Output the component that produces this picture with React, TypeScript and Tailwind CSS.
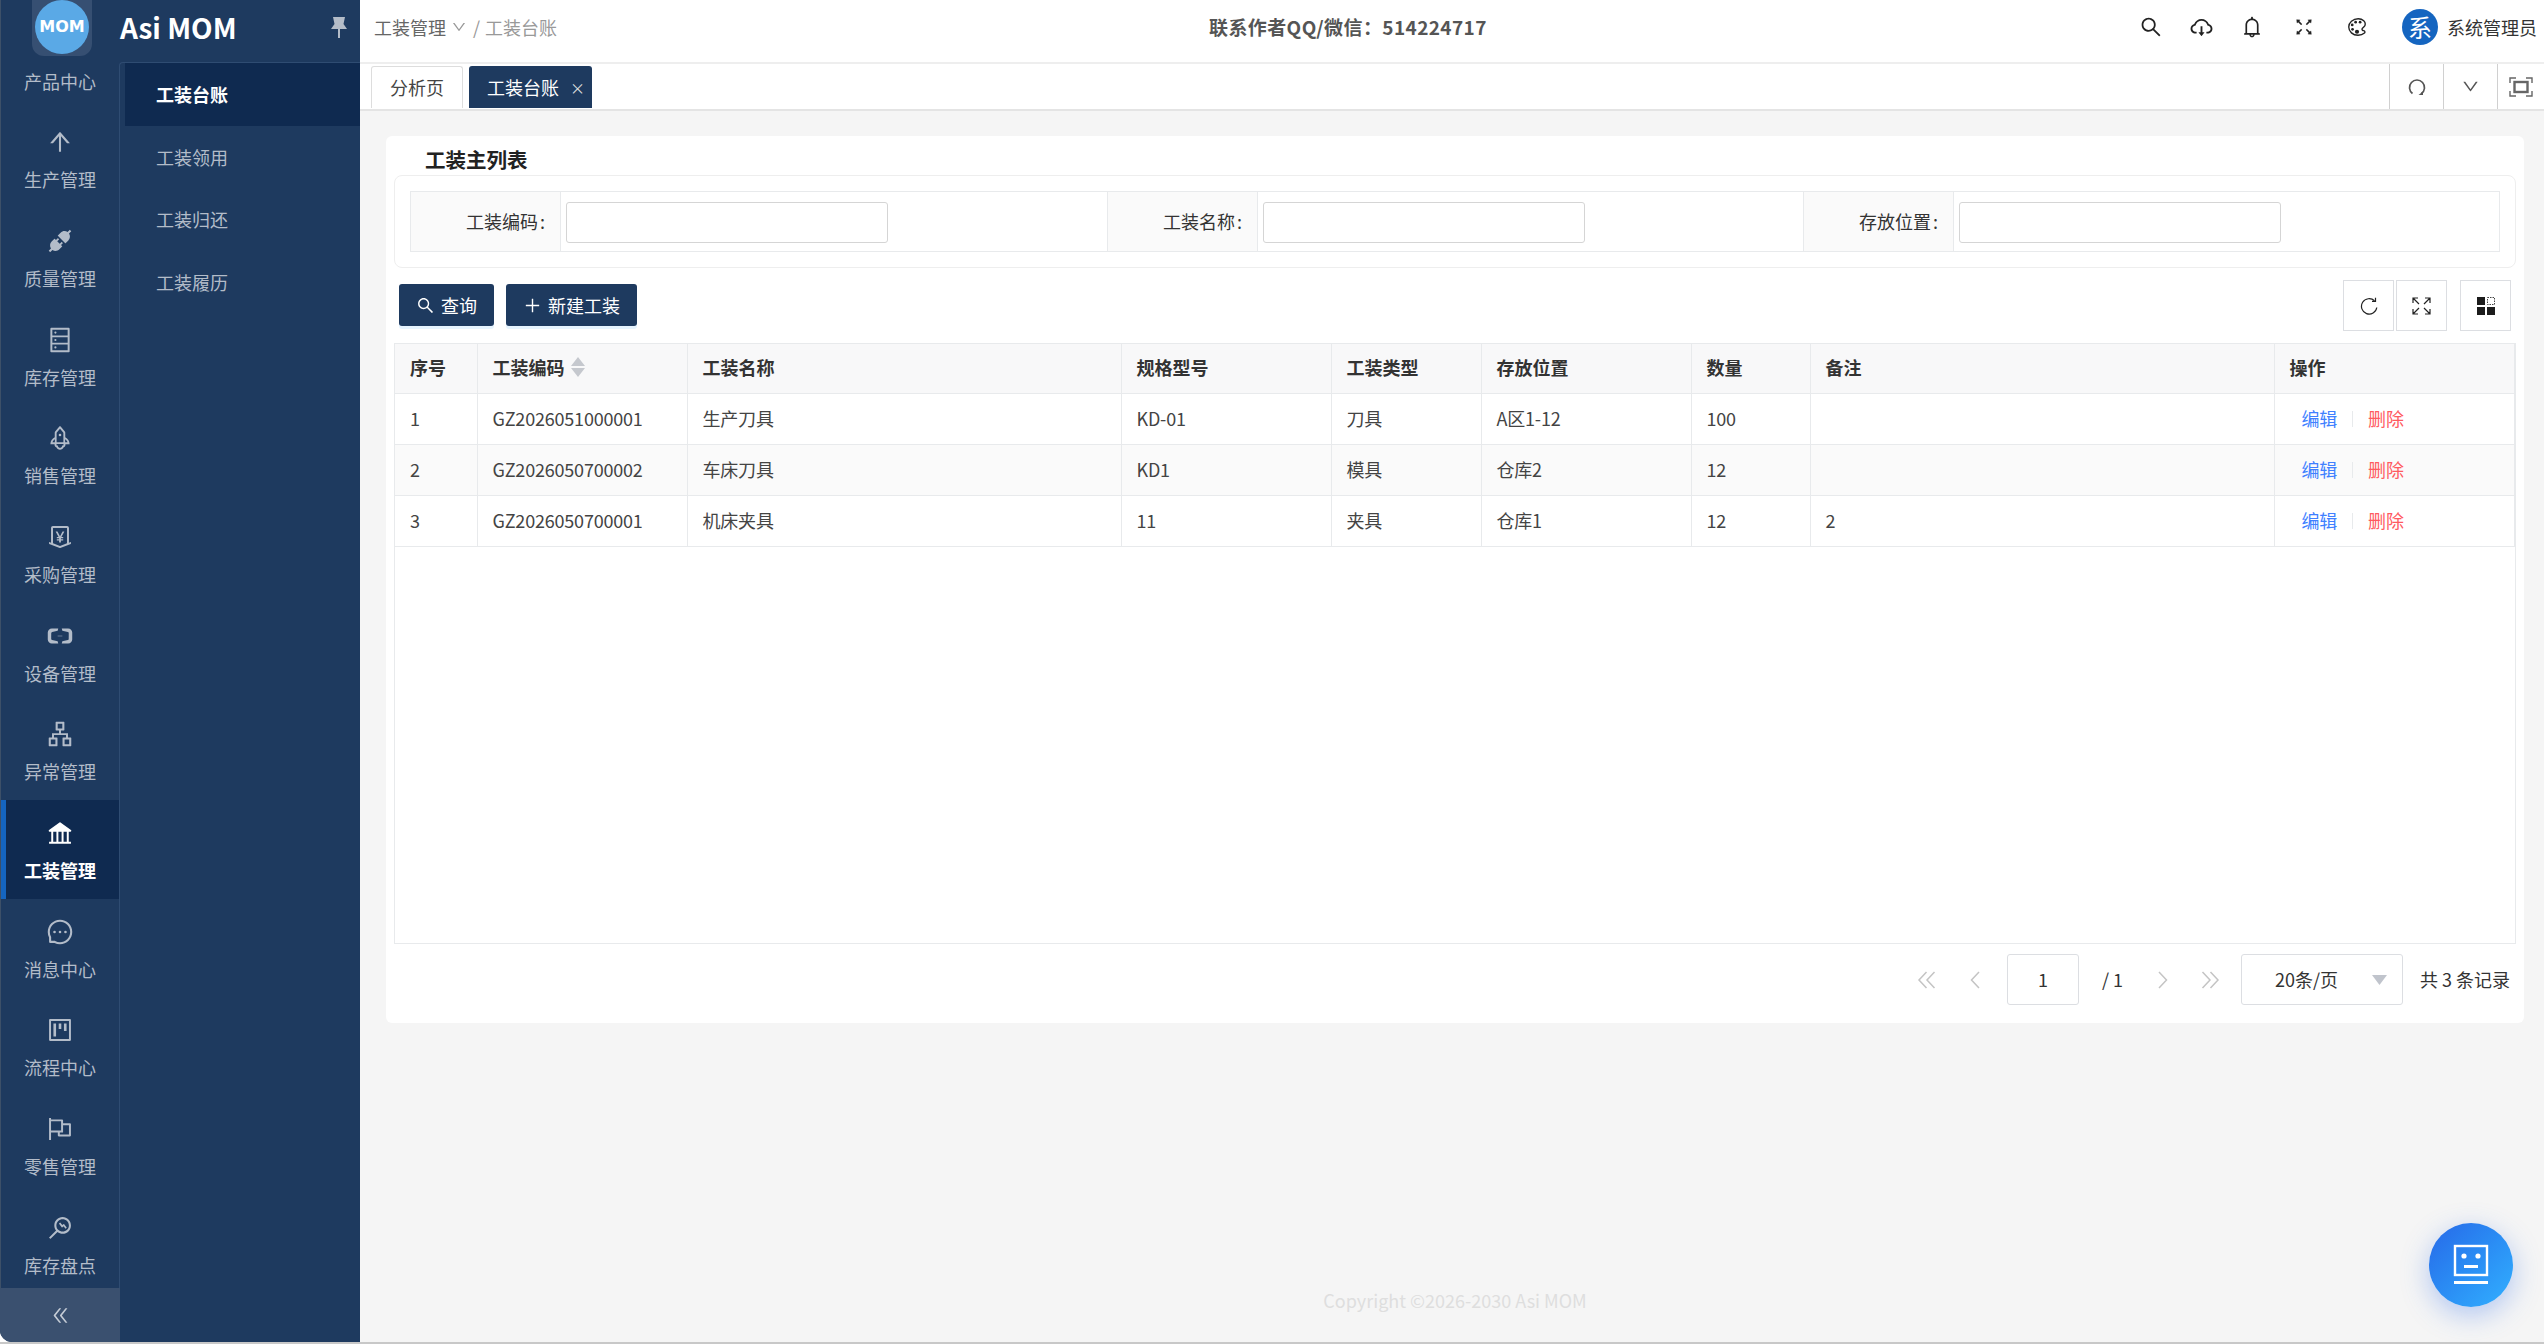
import React from "react";
import {
  AiOutlineArrowUp, AiFillApi, AiOutlineDatabase, AiOutlineRocket, AiOutlineMoneyCollect, AiOutlineAliyun,
  AiOutlineApartment, AiFillBank, AiOutlineMessage, AiOutlineProject, AiOutlineFlag, AiOutlineMonitor,
  AiOutlineDoubleLeft, AiOutlineSearch, AiOutlineCloudDownload, AiOutlineBell,
  AiOutlineFullscreen, AiOutlineDown, AiOutlinePlus,
} from "react-icons/ai";
import { IoColorPaletteOutline } from "react-icons/io5";

const rail = [
  { label: "生产管理", Icon: AiOutlineArrowUp },
  { label: "质量管理", Icon: AiFillApi },
  { label: "库存管理", Icon: AiOutlineDatabase },
  { label: "销售管理", Icon: AiOutlineRocket },
  { label: "采购管理", Icon: AiOutlineMoneyCollect },
  { label: "设备管理", Icon: AiOutlineAliyun },
  { label: "异常管理", Icon: AiOutlineApartment },
  { label: "工装管理", Icon: AiFillBank, active: true },
  { label: "消息中心", Icon: AiOutlineMessage },
  { label: "流程中心", Icon: AiOutlineProject },
  { label: "零售管理", Icon: AiOutlineFlag },
  { label: "库存盘点", Icon: AiOutlineMonitor },
];

const rows = [
  ["1", "GZ2026051000001", "生产刀具", "KD-01", "刀具", "A区1-12", "100", ""],
  ["2", "GZ2026050700002", "车床刀具", "KD1", "模具", "仓库2", "12", ""],
  ["3", "GZ2026050700001", "机床夹具", "11", "夹具", "仓库1", "12", "2"],
];

const filters = ["工装编码", "工装名称", "存放位置"];
const th = "border-r border-b border-[#e8eaec] px-[15px] pb-[2px] text-left font-bold text-[#333]";
const td = "border-r border-b border-[#e8eaec] px-[15px] tracking-[-0.2px] text-[#444]";

function PinIcon() {
  return (
    <svg width="16" height="22" viewBox="0 0 16 22" fill="#b4bcc8">
      <path d="M2 1h12l-1.500 7L16 13H9v9H7v-9H0l3.500-5z" />
    </svg>
  );
}

function GridIcon() {
  return (
    <svg width="18" height="18" viewBox="0 0 18 18">
      <rect x="0" y="0" width="8" height="8" fill="#1c1c1c" />
      <rect x="10.500" y="0.500" width="7" height="7" fill="none" stroke="#444" strokeDasharray="1.500 1" />
      <rect x="0" y="10" width="8" height="8" fill="#1c1c1c" />
      <rect x="10" y="10" width="8" height="8" fill="#1c1c1c" />
    </svg>
  );
}

function BotIcon() {
  return (
    <svg width="36" height="42" viewBox="0 0 36 42" fill="white">
      <rect x="2" y="2" width="32" height="29" fill="none" stroke="white" strokeWidth="2.400" />
      <circle cx="11" cy="12" r="2.600" />
      <circle cx="25" cy="12" r="2.600" />
      <rect x="11" y="21" width="14" height="3" />
      <rect x="1" y="37" width="34" height="3" />
    </svg>
  );
}

function TabReload() {
  return (
    <svg width="18" height="18" viewBox="0 0 18 18" fill="none" stroke="#555" strokeWidth="1.700">
      <path d="M4.500 15.500A7.500 7.500 0 1 1 13.500 15.500" />
      <path d="M10.500 17h4.500v-3.500" fill="#555" stroke="none" />
    </svg>
  );
}

function TabExpand() {
  return (
    <svg width="24" height="20" viewBox="0 0 24 20" fill="none" stroke="#666">
      <path d="M1 6V1h6M17 1h6v5M23 14v5h-6M7 19H1v-5" strokeWidth="1.400" />
      <rect x="5.500" y="5" width="13" height="10" strokeWidth="2.400" />
    </svg>
  );
}

function ToolReload() {
  return (
    <svg width="18" height="18" viewBox="0 0 18 18" fill="none" stroke="#222" strokeWidth="1.200">
      <path d="M14.500 3.800A7.700 7.700 0 1 0 16.800 10.500" />
      <path d="M15.500 0.800V4.300H12" />
    </svg>
  );
}

function ToolExpand() {
  return (
    <svg width="19" height="18" viewBox="0 0 19 18" fill="none" stroke="#222" strokeWidth="1.200">
      <path d="M1 6V1h5M1 1l6 6M13 1h5v5M18 1l-6 6M18 12v5h-5M18 17l-6-6M6 17H1v-5M1 17l6-6" />
    </svg>
  );
}

function Chevrons({ dir }: { dir: "left" | "right" }) {
  return (
    <svg width="20" height="18" viewBox="0 0 20 18" fill="none" stroke="#c4c4c4" strokeWidth="1.500" className={dir === "right" ? "rotate-180" : ""}>
      <path d="M9.500 1L2 9l7.500 8M17.500 1L10 9l7.500 8" />
    </svg>
  );
}

function Chevron({ dir }: { dir: "left" | "right" }) {
  return (
    <svg width="12" height="18" viewBox="0 0 12 18" fill="none" stroke="#c4c4c4" strokeWidth="1.500" className={dir === "right" ? "rotate-180" : ""}>
      <path d="M10 1L2.500 9l7.500 8" />
    </svg>
  );
}

function Rail() {
  return (
    <div className="flex h-full w-[119px] shrink-0 flex-col border-l border-[#3d5068]">
      <div className="flex-1 overflow-hidden">
        <div className="flex h-[109.33px] flex-col items-center">
          <div className="ml-[4px] flex h-[56px] w-[60px] items-start justify-center rounded-b-[12px] bg-[#364f72]">
            <div className="flex h-[54px] w-[54px] items-center justify-center rounded-full bg-[#5aa9e6] font-['DejaVu_Sans',sans-serif] text-[16px] font-bold leading-none text-white">
              MOM
            </div>
          </div>
          <div className="mt-[13px] text-[18px] leading-[24px] text-[#b3bcc9]">产品中心</div>
        </div>
        {rail.map(({ label, Icon, active }) => (
          <div
            key={label}
            className={
              active
                ? "flex h-[98.67px] flex-col items-center border-l-[5px] border-[#1565c0] bg-[#0f2a50] pr-[5px] text-white"
                : "flex h-[98.67px] flex-col items-center text-[#b3bcc9]"
            }
          >
            <div className="mt-[20px] flex h-[26px] items-center justify-center">
              <Icon size={28} />
            </div>
            <div className={active ? "mt-[12px] text-[18px] font-bold leading-[24px]" : "mt-[12px] text-[18px] leading-[24px]"}>
              {label}
            </div>
          </div>
        ))}
      </div>
      <div className="relative z-10 flex h-[54px] w-[120px] shrink-0 -ml-px items-center justify-center rounded-bl-[12px] bg-[#3a506f] text-[#c3cad4]">
        <AiOutlineDoubleLeft size={21} />
      </div>
    </div>
  );
}

function SubMenu() {
  return (
    <div className="flex h-full w-[241px] shrink-0 flex-col">
      <div className="flex h-[62px] shrink-0 items-center justify-between pb-[8px] pl-[1px] pr-[13px]">
        <span className="text-[28px] font-bold leading-[40px] text-white">Asi MOM</span>
        <PinIcon />
      </div>
      <div className="flex flex-1 flex-col rounded-tl-[4px] border-l border-t border-[#2f4c72] pl-[5px]">
        <div className="flex h-[63px] items-center bg-[#0f2a50] pl-[31px] text-[18px] font-bold text-white">工装台账</div>
        <div className="flex h-[62.6px] items-center pl-[31px] text-[18px] text-[#b3bcc9]">工装领用</div>
        <div className="flex h-[62.6px] items-center pl-[31px] text-[18px] text-[#b3bcc9]">工装归还</div>
        <div className="flex h-[62.6px] items-center pl-[31px] text-[18px] text-[#b3bcc9]">工装履历</div>
      </div>
    </div>
  );
}

function Header() {
  return (
    <div className="flex h-[64px] shrink-0 items-center border-b-2 border-[#eeeeee] bg-white pb-[8px] text-[18px]">
      <div className="flex w-[720px] items-center pl-[14px]">
        <span className="text-[#666]">工装管理</span>
        <AiOutlineDown size={16} className="ml-[5px] text-[#999]" />
        <span className="ml-[6px] text-[#999]">/</span>
        <span className="ml-[5px] text-[#999]">工装台账</span>
      </div>
      <div className="flex-1 pl-[129px] text-[19px] font-semibold tracking-[0.4px] text-[#555]">联系作者QQ/微信：514224717</div>
      <div className="flex items-center text-[#222]">
        <div className="flex w-[50px] justify-center"><AiOutlineSearch size={24} /></div>
        <div className="flex w-[50px] justify-center"><AiOutlineCloudDownload size={25} /></div>
        <div className="flex w-[52px] justify-center"><AiOutlineBell size={24} /></div>
        <div className="flex w-[52px] justify-center"><AiOutlineFullscreen size={22} /></div>
        <div className="flex w-[54px] justify-center"><IoColorPaletteOutline size={22} /></div>
        <div className="ml-[18px] flex h-[36px] w-[36px] items-center justify-center rounded-full bg-[#1565c0] text-[24px] leading-none text-white">系</div>
        <div className="ml-[9px] w-[97px] text-[18px] text-[#333]">系统管理员</div>
      </div>
    </div>
  );
}

function TabBar() {
  return (
    <div className="flex h-[47px] shrink-0 border-b-2 border-[#e4e4e4] bg-white pl-[11px]">
      <div className="mt-[2px] flex h-[42px] w-[92px] shrink-0 items-center justify-center rounded-t-[3px] border border-b-0 border-[#dddddd] text-[18px] text-[#444]">分析页</div>
      <div className="ml-[6px] mt-[2px] flex h-[42px] w-[123px] shrink-0 items-center rounded-t-[3px] bg-[#1e3a5f] pl-[18px] text-[18px] text-white">
        工装台账
        <span className="ml-[11px] text-[15px] leading-none text-[#ddd]">×</span>
      </div>
      <div className="ml-auto flex text-[#555]">
        <div className="flex w-[54px] items-center justify-center border-l-[1px] border-[#d0d0d0]"><TabReload /></div>
        <div className="flex w-[54px] items-center justify-center border-l-[1px] border-[#d0d0d0]"><AiOutlineDown size={19} /></div>
        <div className="flex w-[47px] items-center justify-center border-l-[1px] border-[#d0d0d0]"><TabExpand /></div>
      </div>
    </div>
  );
}

function Filters() {
  return (
    <div className="rounded-[8px] border border-[#eeeeee] px-[15px] py-[15px]">
      <div className="grid h-[61px] grid-cols-3 border border-[#e8eaec]">
        {filters.map((f, i) => (
          <div key={f} className={i > 0 ? "flex border-l border-[#e8eaec]" : "flex"}>
            <div className="flex w-[150px] shrink-0 items-center justify-end border-r border-[#e8eaec] bg-[#fafafa] pr-[15px] text-[18px] text-[#333]">
              {f}<span className="ml-[2px]">:</span>
            </div>
            <div className="ml-[5px] mt-[10px] h-[41px] w-[322px] rounded-[3px] border border-[#d5d5d5] bg-white" />
          </div>
        ))}
      </div>
    </div>
  );
}

function Toolbar() {
  const box = "flex h-[51px] w-[51px] items-center justify-center border border-[#dcdee2] text-[#222]";
  return (
    <div className="mt-[12px] flex h-[51px] items-start pl-[5px] pr-[5px]">
      <button className="mt-[4px] flex h-[42px] w-[95px] items-center justify-center gap-[6px] rounded-[3px] bg-[#1e3a5f] text-[18px] text-white shadow-[0_3px_0_#e6f4ff]">
        <AiOutlineSearch size={19} />查询
      </button>
      <button className="ml-[12px] mt-[4px] flex h-[42px] w-[131px] items-center justify-center gap-[6px] rounded-[3px] bg-[#1e3a5f] text-[18px] text-white shadow-[0_3px_0_#e6f4ff]">
        <AiOutlinePlus size={19} />新建工装
      </button>
      <div className="ml-auto flex">
        <div className={box}><ToolReload /></div>
        <div className={`ml-[2px] ${box}`}><ToolExpand /></div>
        <div className={`ml-[13px] ${box}`}><GridIcon /></div>
      </div>
    </div>
  );
}

function DataTable() {
  return (
    <div className="mt-[12px] h-[601px] border border-[#e8eaec] text-[18px]">
      <table className="w-[2119px] table-fixed border-collapse">
        <colgroup>
          <col className="w-[82px]" /><col className="w-[210px]" /><col className="w-[434px]" />
          <col className="w-[210px]" /><col className="w-[150px]" /><col className="w-[210px]" />
          <col className="w-[119px]" /><col className="w-[464px]" /><col className="w-[240px]" />
        </colgroup>
        <thead>
          <tr className="h-[49px] bg-[#f8f8f9]">
            <th className={th}>序号</th>
            <th className={th}>
              <span className="inline-flex items-center">
                工装编码
                <svg className="ml-[5px]" width="16" height="22" viewBox="0 0 16 22" fill="#c5c8ce">
                  <path d="M8 1l7 9H1zM8 21l-7-9h14z" />
                </svg>
              </span>
            </th>
            <th className={th}>工装名称</th>
            <th className={th}>规格型号</th>
            <th className={th}>工装类型</th>
            <th className={th}>存放位置</th>
            <th className={th}>数量</th>
            <th className={th}>备注</th>
            <th className={th}>操作</th>
          </tr>
        </thead>
        <tbody>
          {rows.map((r, i) => (
            <tr key={r[0]} className={i === 1 ? "h-[51px] bg-[#fafafa]" : "h-[51px]"}>
              {r.map((c, j) => (
                <td key={j} className={td}>{c}</td>
              ))}
              <td className={td}>
                <div className="flex items-center pl-[12px]">
                  <span className="text-[#4080ff]">编辑</span>
                  <span className="ml-[15px] h-[16px] w-px bg-[#e8eaec]" />
                  <span className="ml-[15px] text-[#ff5a5f]">删除</span>
                </div>
              </td>
            </tr>
          ))}
        </tbody>
      </table>
    </div>
  );
}

function Pagination() {
  const arrow = "flex justify-center";
  return (
    <div className="mt-[10px] flex h-[51px] items-center justify-end pr-[6px] text-[18px] text-[#333]">
      <div className={`w-[47px] ${arrow}`}><Chevrons dir="left" /></div>
      <div className={`w-[48px] ${arrow}`}><Chevron dir="left" /></div>
      <div className="ml-[8px] flex h-[51px] w-[72px] items-center justify-center rounded-[3px] border border-[#dcdee2]">1</div>
      <div className="w-[60px] pl-[23px]">/ 1</div>
      <div className={`w-[48px] ${arrow}`}><Chevron dir="right" /></div>
      <div className={`w-[46px] ${arrow}`}><Chevrons dir="right" /></div>
      <div className="ml-[8px] flex h-[51px] w-[162px] items-center rounded-[3px] border border-[#dcdee2] pl-[33px] pr-[15px]">
        20条/页
        <svg className="ml-auto" width="15" height="10" viewBox="0 0 15 10" fill="#c0c4cc"><path d="M0 0h15L7.500 10z" /></svg>
      </div>
      <div className="ml-[17px]">共 3 条记录</div>
    </div>
  );
}

export default function App() {
  return (
    <div className="flex h-[1344px] w-[2544px] overflow-hidden border-b-2 border-[#c8c8c8] bg-white font-['Noto_Sans_CJK_SC',sans-serif]">
      <aside className="flex h-full w-[360px] shrink-0 overflow-hidden rounded-bl-[12px] bg-[#1e3a5f]">
        <Rail />
        <SubMenu />
      </aside>
      <main className="relative flex min-w-0 flex-1 flex-col bg-[#f5f5f5]">
        <Header />
        <TabBar />
        <div className="ml-[26px] mr-[20px] mt-[25px] h-[887px] rounded-[6px] bg-white px-[8px]">
          <div className="h-[39px] pl-[31px] pt-[8px] text-[20.5px] font-bold leading-[30px] text-[#222]">工装主列表</div>
          <Filters />
          <Toolbar />
          <DataTable />
          <Pagination />
        </div>
        <div className="mt-[265px] pl-[6px] text-center text-[18px] leading-[24px] text-[#dedede]">Copyright ©2026-2030 Asi MOM</div>
        <div className="absolute bottom-[35px] right-[31px] flex h-[84px] w-[84px] items-center justify-center rounded-full bg-gradient-to-br from-[#2868e8] to-[#33b0ff] shadow-[0_8px_28px_rgba(45,110,235,0.35)]">
          <BotIcon />
        </div>
      </main>
    </div>
  );
}
